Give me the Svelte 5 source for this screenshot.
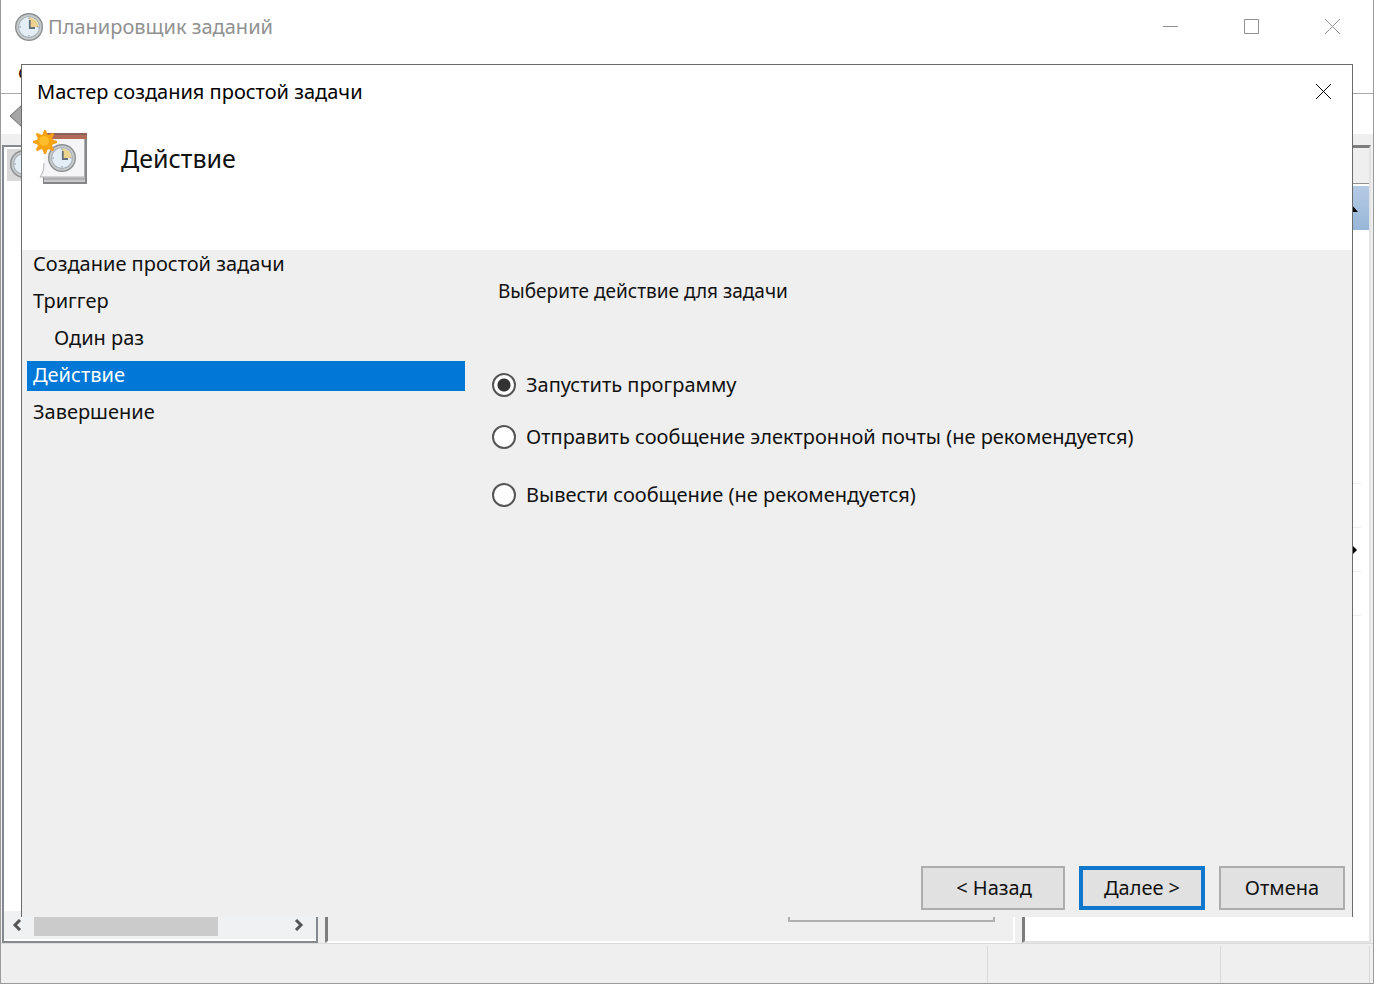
<script>
    const steps = [
        { id: "create", label: "Создание простой задачи" },
        { id: "trigger", label: "Триггер" },
        { id: "once", label: "Один раз", nested: true },
        { id: "action", label: "Действие" },
        { id: "finish", label: "Завершение" },
    ];

    const actions = [
        { id: "run", label: "Запустить программу" },
        {
            id: "mail",
            label: "Отправить сообщение электронной почты (не рекомендуется)",
        },
        { id: "message", label: "Вывести сообщение (не рекомендуется)" },
    ];

    // eight rays around the "new" badge
    const rays = [0, 45, 90, 135, 180, 225, 270, 315];

    let currentStep = $state("action");
    let selectedAction = $state("run");

    function move(offset) {
        const index = steps.findIndex((s) => s.id === currentStep) + offset;
        if (steps[index]) {
            currentStep = steps[index].id;
        }
    }
</script>

{#snippet clock()}
    <circle cx="15" cy="15" r="14" fill="#8b8f92" />
    <circle cx="15" cy="15" r="12.6" fill="#c9cccd" />
    <circle cx="15" cy="15" r="10.8" fill="#a3abb0" />
    <circle cx="15" cy="15" r="10" fill="#e3eef7" />
    <path d="M15 15V5.4A9.6 9.6 0 0 1 24.6 15z" fill="#ecd28d" />
    <path d="M15.8 8v8H21" fill="none" stroke="#66717c" stroke-width="1.8" />
    <path
        d="M15 5.4v1.6M15 23v1.6M5.4 15H7M23 15h1.6"
        stroke="#8493a0"
        stroke-width="1"
    />
{/snippet}

<div class="window">
    <header class="titlebar">
        <svg class="app-icon" viewBox="0 0 30 30" aria-hidden="true">
            {@render clock()}
        </svg>
        <span class="app-title">Планировщик заданий</span>
        <div class="window-controls">
            <button aria-label="Свернуть">
                <svg viewBox="0 0 16 16"><path d="M0 7.5h15" /></svg>
            </button>
            <button aria-label="Развернуть">
                <svg viewBox="0 0 16 16">
                    <path d="M.5 .5h14v14H.5z" />
                </svg>
            </button>
            <button aria-label="Закрыть окно">
                <svg viewBox="0 0 16 16"><path d="M0 0l15 15M15 0L0 15" /></svg>
            </button>
        </div>
    </header>
    <div class="menubar">
        <button>Файл</button>
    </div>
    <div class="toolbar">
        <svg class="back" viewBox="0 0 24 28" aria-hidden="true">
            <path
                d="M1 14L15 1v7h9v12h-9v7z"
                fill="#a5a5a5"
                stroke="#6f6f6f"
            />
        </svg>
    </div>

    <div class="panes">
        <div class="tree">
            <div class="tree-item">
                <svg class="tree-icon" viewBox="0 0 30 30" aria-hidden="true">
                    {@render clock()}
                </svg>
            </div>
            <div class="scrollbar">
                <svg viewBox="0 0 10 12"><path d="M8 1L3 6l5 5" /></svg>
                <div class="track"><div class="thumb"></div></div>
                <svg viewBox="0 0 10 12"><path d="M2 1l5 5-5 5" /></svg>
            </div>
        </div>
        <div class="summary"><div class="summary-box"></div></div>
        <div class="actions-pane">
            <div class="actions-head"></div>
            <div class="actions-group">
                <svg viewBox="0 0 14 8"><path d="M0 8l7-8 7 8z" /></svg>
            </div>
            <div class="actions-list">
                <div></div>
                <div class="submenu">
                    <svg viewBox="0 0 4 8"><path d="M0 0l4 4-4 4z" /></svg>
                </div>
                <div></div>
            </div>
        </div>
    </div>

    <footer class="statusbar">
        <div></div>
        <div></div>
        <div></div>
    </footer>

    <div class="dialog" role="dialog" aria-labelledby="wizard-title">
        <div class="dialog-title">
            <span id="wizard-title">Мастер создания простой задачи</span>
            <button class="dialog-close" aria-label="Закрыть">
                <svg viewBox="0 0 16 16"><path d="M0 0l15 15M15 0L0 15" /></svg>
            </button>
        </div>

        <div class="banner">
            <svg class="task-icon" viewBox="0 0 58 56" aria-hidden="true">
                <path d="M11 46h41V5h3v50H11z" fill="#85858a" />
                <path d="M12 47h41v6H12z" fill="#c9c9cb" />
                <path d="M12 50h41" stroke="#97979b" />
                <path d="M12 5h41v43H8c3-4 4-8 4-14z" fill="#f5f5f7" />
                <path d="M8 48c3-4 4-8 4-14" fill="none" stroke="#b5b5b8" />
                <path d="M52.5 10v38H8" fill="none" stroke="#b0b0b4" />
                <path d="M12 4h43v6H12z" fill="#b06a57" />
                <path d="M12 4h43v2H12z" fill="#8a6259" />
                <g transform="translate(15 14)">{@render clock()}</g>
                <g transform="translate(13 13)">
                    {#each rays as angle}
                        <path
                            d="M-3-6L-1-12H1L3-6z"
                            fill="#f5a11a"
                            transform="rotate({angle})"
                        />
                    {/each}
                    <circle r="8" fill="#f8a410" />
                    <circle cx="-1" cy="-1" r="5" fill="#ffbc2a" />
                </g>
            </svg>
            <h1>Действие</h1>
        </div>

        <div class="body">
            <nav class="steps">
                {#each steps as step}
                    <button
                        class:nested={step.nested}
                        class:current={step.id === currentStep}
                        onclick={() => (currentStep = step.id)}
                        >{step.label}</button
                    >
                {/each}
            </nav>

            <fieldset class="choices">
                <legend>Выберите действие для задачи</legend>
                {#each actions as action}
                    <label>
                        <input
                            type="radio"
                            name="action"
                            value={action.id}
                            bind:group={selectedAction}
                        />
                        {action.label}
                    </label>
                {/each}
            </fieldset>
        </div>

        <div class="buttons">
            <button class="wide" onclick={() => move(-1)}>&lt; Назад</button>
            <button class="default" onclick={() => move(1)}>Далее &gt;</button>
            <button>Отмена</button>
        </div>
    </div>
</div>

<style>
    :global(body) {
        margin: 0;
        background: #efefef;
    }

    .window {
        position: relative;
        display: flex;
        flex-direction: column;
        box-sizing: border-box;
        min-height: 100vh;
        border: 1px solid #9b9b9b;
        border-top: none;
        background: #fff;
        color: #111;
        font-family: "Noto Sans", "Open Sans", sans-serif;
        font-size: 20px;
        line-height: 30px;
    }

    button {
        margin: 0;
        padding: 0;
        border: none;
        background: none;
        color: inherit;
        font: inherit;
    }

    .titlebar {
        display: flex;
        align-items: center;
        height: 54px;
        padding-left: 13px;
        color: #919191;
    }

    .app-icon {
        width: 30px;
        height: 30px;
    }

    .app-title {
        flex: 1;
        margin-left: 4px;
    }

    .window-controls {
        display: flex;
    }

    .window-controls button {
        display: flex;
        align-items: center;
        justify-content: center;
        width: 81px;
        height: 54px;
    }

    .window-controls svg,
    .dialog-close svg {
        width: 16px;
        height: 16px;
        fill: none;
        stroke: currentColor;
    }

    .menubar {
        display: flex;
        align-items: center;
        height: 39px;
        padding-left: 17px;
        border-bottom: 1px solid #a8a8a8;
    }

    .toolbar {
        box-sizing: border-box;
        height: 40px;
        padding: 8px 8px 0;
    }

    .back {
        width: 24px;
        height: 28px;
    }

    .panes {
        display: flex;
        flex: 1;
        gap: 7px;
        padding: 11px 2px 0 1px;
        background: #efefef;
    }

    .tree {
        display: flex;
        flex-direction: column;
        justify-content: space-between;
        box-sizing: border-box;
        width: 316px;
        border: 2px solid #858a90;
        background: #fff;
    }

    .tree-item {
        height: 32px;
        margin: 2px 3px;
        padding-left: 2px;
        background: #d9d9d9;
    }

    .tree-icon {
        width: 30px;
        height: 30px;
    }

    .scrollbar {
        display: flex;
        align-items: center;
        height: 28px;
        padding: 0 12px 0 8px;
        border-bottom: 2px solid #fff;
        background: #f0f1f2;
    }

    .scrollbar svg {
        width: 10px;
        height: 12px;
        fill: none;
        stroke: #555;
        stroke-width: 3;
    }

    .track {
        flex: 1;
        padding: 0 12px;
    }

    .thumb {
        width: 74%;
        height: 22px;
        background: #cbcbcb;
    }

    .summary {
        display: flex;
        align-items: flex-end;
        justify-content: flex-end;
        flex: 1;
        padding: 0 18px 19px;
        border: 3px solid #7d7d7d;
        border-right: 2px solid #fff;
        border-bottom: 2px solid #fff;
    }

    .summary-box {
        width: 203px;
        height: 60px;
        border: 2px solid #b0b0b0;
    }

    .actions-pane {
        box-sizing: border-box;
        width: 349px;
        border: 3px solid #7d7d7d;
        border-right: 2px solid #e3e3e3;
        border-bottom: 2px solid #e3e3e3;
        background: #fff;
    }

    .actions-head {
        height: 35px;
        border-bottom: 1px solid #8f8f8f;
        background: #efefef;
    }

    .actions-group {
        display: flex;
        align-items: center;
        justify-content: flex-end;
        height: 44px;
        margin-top: 2px;
        padding-right: 11px;
        background: linear-gradient(#b4cbe5, #98b6d8);
    }

    .actions-group svg {
        width: 14px;
        height: 8px;
    }

    .actions-list {
        margin: 253px 8px 0;
        border-top: 1px solid #eee;
    }

    .actions-list div {
        height: 43px;
        border-bottom: 1px solid #eee;
    }

    .actions-list .submenu {
        display: flex;
        align-items: center;
        justify-content: flex-end;
    }

    .submenu svg {
        width: 4px;
        height: 8px;
        margin-right: 4px;
    }

    .statusbar {
        display: flex;
        height: 37px;
        padding: 2px 3px 0 0;
        border-top: 1px solid #dcdcdc;
        background: #efefef;
    }

    .statusbar div {
        border-right: 1px solid #d9d9d9;
    }

    .statusbar div:first-child {
        flex: 1;
    }

    .statusbar div:nth-child(2) {
        width: 232px;
    }

    .statusbar div:last-child {
        width: 148px;
    }

    /* wizard, over the main window */
    .dialog {
        position: absolute;
        inset: 64px 20px 66px;
        display: flex;
        flex-direction: column;
        border: 1px solid #6b6b6b;
        border-bottom: none;
        background: #efefef;
    }

    .dialog-title {
        display: flex;
        align-items: center;
        justify-content: space-between;
        height: 54px;
        padding: 0 20px 0 15px;
        background: #fff;
        color: #000;
    }

    .dialog-close {
        display: flex;
    }

    .banner {
        display: flex;
        height: 121px;
        padding: 10px 10px 0;
        background: #fff;
    }

    .task-icon {
        width: 58px;
        height: 56px;
    }

    h1 {
        margin: 14px 0 0 31px;
        font-size: 25px;
        font-weight: 400;
        line-height: 30px;
    }

    .body {
        display: flex;
        flex: 1;
    }

    .steps {
        display: flex;
        flex-direction: column;
        gap: 7px;
        width: 438px;
        margin-left: 5px;
    }

    .steps button {
        height: 30px;
        padding: 0 0 2px 6px;
        line-height: 28px;
        text-align: left;
    }

    .steps .nested {
        padding-left: 27px;
    }

    .steps .current {
        background: #0078d7;
        color: #fff;
    }

    .choices {
        display: flex;
        flex-direction: column;
        gap: 22px;
        flex: 1;
        margin: 0;
        padding: 26px 0 0 27px;
        border: none;
    }

    legend {
        float: left;
        margin-bottom: 42px;
        padding: 0 0 0 6px;
        font-size: 19px;
    }

    label {
        display: flex;
        align-items: center;
        gap: 10px;
    }

    label:last-child {
        margin-top: 6px;
    }

    input {
        appearance: none;
        box-sizing: border-box;
        width: 24px;
        height: 24px;
        margin: 0;
        border: 2px solid #555;
        border-radius: 50%;
        background: #fff;
    }

    input:checked {
        background: radial-gradient(circle, #333 6px, #fff 7px);
    }

    .buttons {
        display: flex;
        justify-content: flex-end;
        gap: 14px;
        padding: 0 7px 7px;
    }

    .buttons button {
        box-sizing: border-box;
        width: 126px;
        height: 44px;
        border: 2px solid #adadad;
        background: #e1e1e1;
    }

    .buttons .wide {
        width: 144px;
        padding-left: 2px;
    }

    .buttons .default {
        border: 4px solid #0f78cc;
    }
</style>
